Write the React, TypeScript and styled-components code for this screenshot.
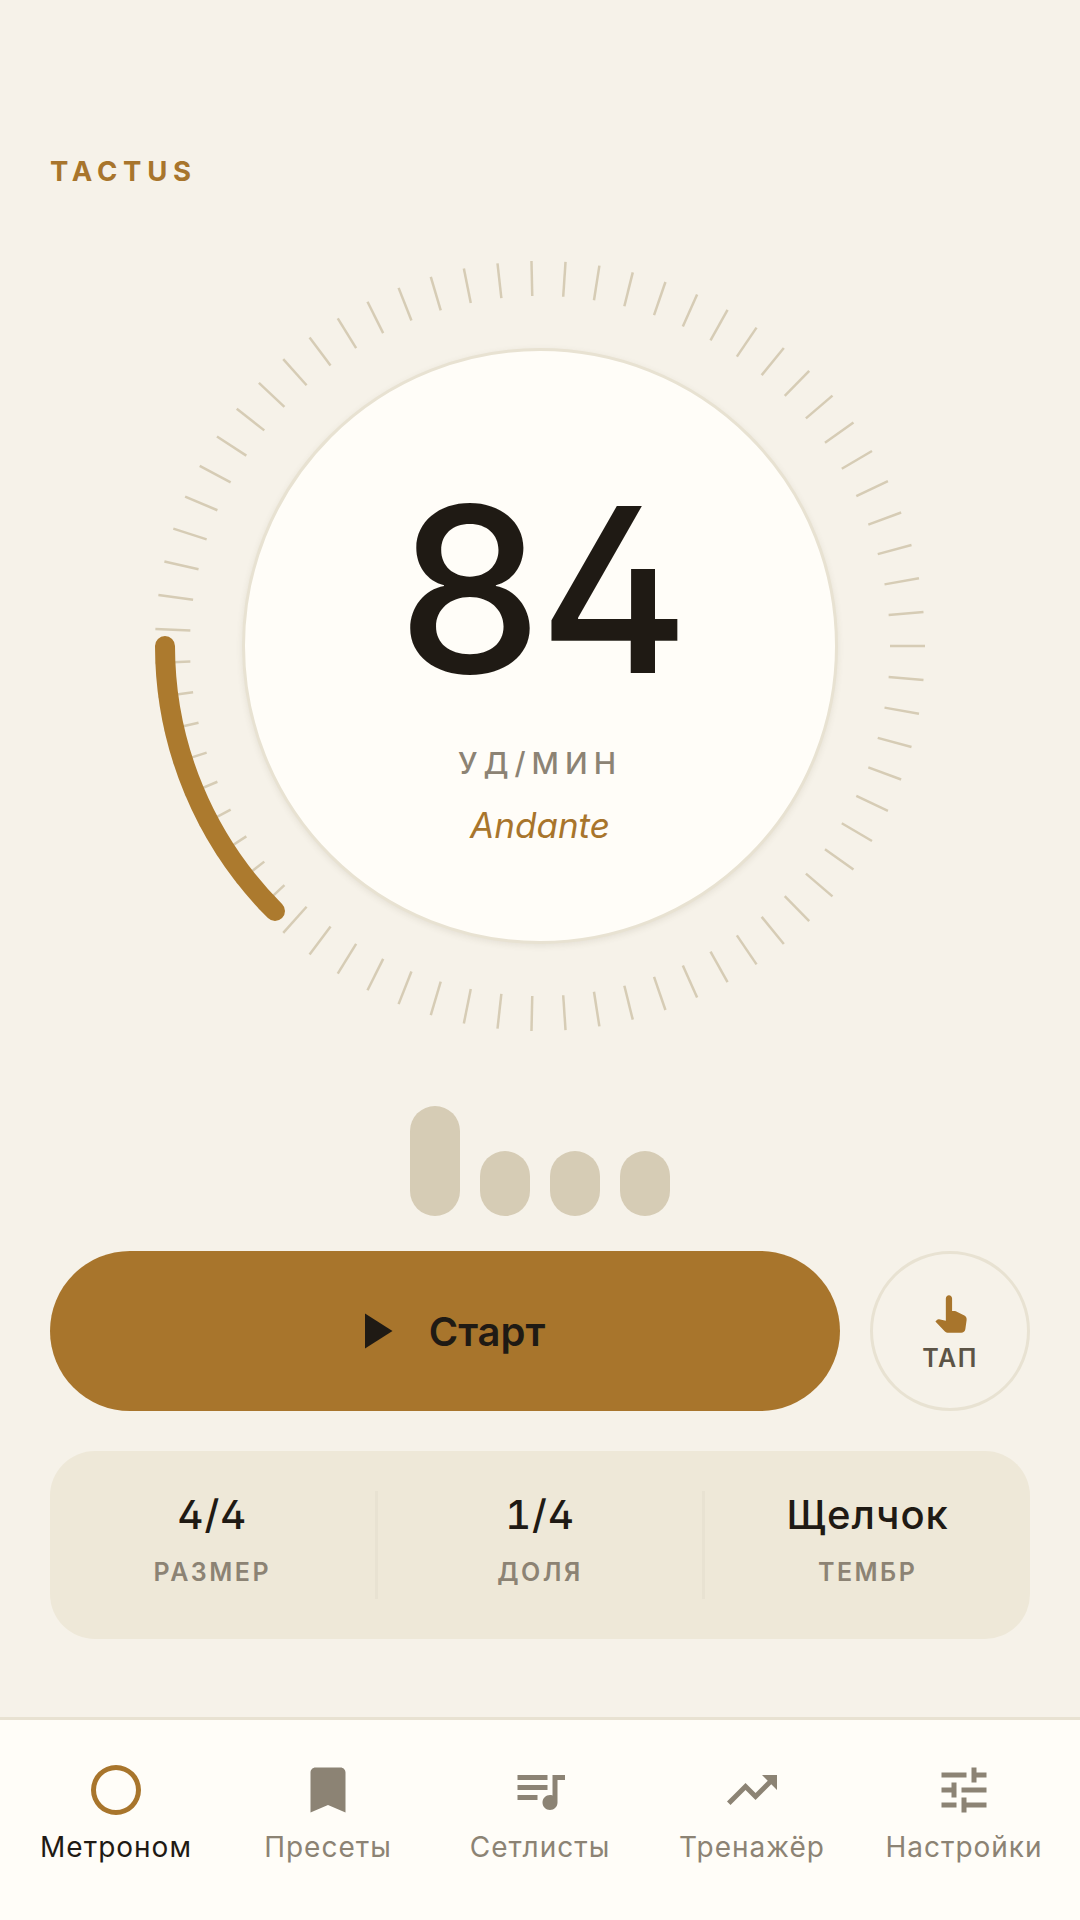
import React from "react";
import styled, { createGlobalStyle } from "styled-components";
import { MdPanToolAlt } from "react-icons/md";

const Global = createGlobalStyle`
  html, body { margin: 0; padding: 0; background: #f6f2e9; }
  * { box-sizing: border-box; }
  body { font-family: Inter, "Noto Sans", sans-serif; }
`;

const Page = styled.div`
  width: 1080px;
  height: 1920px;
  display: flex;
  flex-direction: column;
  background: #f6f2e9;
  color: #1f1a14;
  overflow: hidden;
`;
const Main = styled.main`
  flex: 1;
  display: flex;
  flex-direction: column;
  padding: 156px 50px 0;
`;
const Brand = styled.h1`
  margin: 0;
  font-size: 27.5px;
  line-height: 30px;
  font-weight: 700;
  letter-spacing: 5.8px;
  color: #a8752c;
`;
const DialArea = styled.section`
  position: relative;
  margin-top: 162px;
  height: 596px;
  display: flex;
  justify-content: center;
`;
const Ring = styled.svg`
  position: absolute;
  left: -50px;
  top: -102px;
  width: 1080px;
  height: 800px;
`;
const Face = styled.div`
  position: relative;
  width: 596px;
  height: 596px;
  border-radius: 50%;
  background: #fffdf8;
  border: 3px solid #e8e2d2;
  box-shadow: 0 2px 6px rgba(90, 75, 50, 0.1);
  display: flex;
  flex-direction: column;
  align-items: center;
`;
const Bpm = styled.div`
  margin-top: 118px;
  font-size: 230px;
  line-height: 240px;
  font-weight: 500;
  letter-spacing: -4.6px;
  font-feature-settings: "tnum", "ss01", "cv02";
`;
const Unit = styled.div`
  margin-top: 36px;
  font-size: 30px;
  line-height: 36px;
  font-weight: 500;
  letter-spacing: 6px;
  color: #8c8374;
`;
const Tempo = styled.div`
  margin-top: 22px;
  font-size: 35px;
  line-height: 44px;
  font-style: italic;
  color: #a8752c;
`;
const Beats = styled.div`
  margin-top: 162px;
  height: 110px;
  display: flex;
  justify-content: center;
  align-items: flex-end;
  gap: 20px;
`;
const Beat = styled.div<{ $accent?: boolean }>`
  width: 50px;
  height: ${(p) => (p.$accent ? 110 : 65)}px;
  border-radius: 25px;
  background: #d6ccb5;
`;
const Controls = styled.div`
  margin-top: 35px;
  display: flex;
  gap: 30px;
`;
const StartButton = styled.button`
  flex: 1;
  height: 160px;
  border: 0;
  border-radius: 80px;
  background: #a8752c;
  color: #1f1a14;
  font: 600 40px Inter, sans-serif;
  display: flex;
  align-items: center;
  justify-content: center;
  gap: 24px;
`;
const TapButton = styled.button`
  width: 160px;
  height: 160px;
  border-radius: 50%;
  border: 3px solid #e8e2d2;
  background: transparent;
  display: flex;
  flex-direction: column;
  align-items: center;
  justify-content: center;
  gap: 4px;
  padding: 0;
  color: #a8752c;
`;
const TapLabel = styled.span`
  font: 600 25px/30px Inter, sans-serif;
  letter-spacing: 1.5px;
  color: #5c5446;
`;
const Stats = styled.div`
  margin-top: 40px;
  height: 188px;
  border-radius: 45px;
  background: #eee8d8;
  display: flex;
  align-items: center;
`;
const Stat = styled.div`
  flex: 1;
  height: 108px;
  display: flex;
  flex-direction: column;
  align-items: center;
  & + & { border-left: 3px solid #e8e2d2; }
`;
const StatValue = styled.div`
  font-size: 40px;
  line-height: 48px;
  font-weight: 500;
  letter-spacing: 1px;
  font-feature-settings: "tnum", "ss01", "cv02";
`;
const StatLabel = styled.div`
  margin-top: 18px;
  font-size: 25px;
  line-height: 30px;
  font-weight: 600;
  letter-spacing: 2.5px;
  color: #8c8374;
`;
const Nav = styled.nav`
  height: 203px;
  background: #fffdf8;
  border-top: 3px solid #e8e2d2;
  display: flex;
  padding: 0 10px;
`;
const NavItem = styled.div<{ $active?: boolean }>`
  flex: 1;
  display: flex;
  flex-direction: column;
  align-items: center;
  padding-top: 40px;
  color: ${(p) => (p.$active ? "#a8752c" : "#8c8374")};
`;
const NavLabel = styled.span<{ $active?: boolean }>`
  margin-top: 10px;
  font-size: 28px;
  line-height: 34px;
  letter-spacing: 1px;
  white-space: nowrap;
  color: ${(p) => (p.$active ? "#1f1a14" : "#8c8374")};
`;
const Icon = styled.svg`
  width: 60px;
  height: 60px;
  fill: currentColor;
  display: block;
`;

const CX = 540;
const CY = 400;
const N = 71;
const ticks = Array.from({ length: N }, (_, i) => {
  const a = (i / N) * 2 * Math.PI;
  const c = Math.cos(a), s = Math.sin(a);
  return { x1: CX + 350 * c, y1: CY + 350 * s, x2: CX + 385 * c, y2: CY + 385 * s };
});

const navItems = [
  { label: "Метроном", active: true, d: "M12 2a10 10 0 1 0 0 20 10 10 0 0 0 0-20zm0 18a8 8 0 1 1 0-16 8 8 0 0 1 0 16z" },
  { label: "Пресеты", d: "M17 3H7c-1.1 0-2 .9-2 2v16l7-3 7 3V5c0-1.1-.9-2-2-2z" },
  { label: "Сетлисты", d: "M15 6H3v2h12V6zm0 4H3v2h12v-2zM3 16h8v-2H3v2zM17 6v8.18c-.31-.11-.65-.18-1-.18-1.66 0-3 1.34-3 3s1.34 3 3 3 3-1.34 3-3V8h3V6h-5z" },
  { label: "Тренажёр", d: "M16 6l2.29 2.29-4.88 4.88-4-4L2 16.59 3.41 18l6-6 4 4 6.3-6.29L22 12V6z" },
  { label: "Настройки", d: "M3 17v2h6v-2H3zM3 5v2h10V5H3zm10 16v-2h8v-2h-8v-2h-2v6h2zM7 9v2H3v2h4v2h2V9H7zm14 4v-2H11v2h10zm-6-4h2V7h4V5h-4V3h-2v6z" },
];

export default function App() {
  return (
    <Page>
      <Global />
      <Main>
        <Brand>TACTUS</Brand>
        <DialArea>
          <Ring viewBox="0 0 1080 800">
            {ticks.map((t, i) => (
              <line key={i} {...t} stroke="#d6ccb5" strokeWidth="2.5" />
            ))}
            <path d={`M165 ${CY}A375 375 0 0 0 275 ${CY + 265}`} fill="none" stroke="#ac7a2e" strokeWidth="20" strokeLinecap="round" />
          </Ring>
          <Face>
            <Bpm>84</Bpm>
            <Unit>УД/МИН</Unit>
            <Tempo>Andante</Tempo>
          </Face>
        </DialArea>
        <Beats>
          <Beat $accent />
          <Beat />
          <Beat />
          <Beat />
        </Beats>
        <Controls>
          <StartButton>
            <Icon viewBox="0 0 24 24"><path d="M8 5v14l11-7z" /></Icon>
            Старт
          </StartButton>
          <TapButton>
            <MdPanToolAlt size={50} />
            <TapLabel>ТАП</TapLabel>
          </TapButton>
        </Controls>
        <Stats>
          <Stat><StatValue>4/4</StatValue><StatLabel>РАЗМЕР</StatLabel></Stat>
          <Stat><StatValue>1/4</StatValue><StatLabel>ДОЛЯ</StatLabel></Stat>
          <Stat><StatValue>Щелчок</StatValue><StatLabel>ТЕМБР</StatLabel></Stat>
        </Stats>
      </Main>
      <Nav>
        {navItems.map((n) => (
          <NavItem key={n.label} $active={n.active}>
            <Icon viewBox="0 0 24 24"><path d={n.d} /></Icon>
            <NavLabel $active={n.active}>{n.label}</NavLabel>
          </NavItem>
        ))}
      </Nav>
    </Page>
  );
}
